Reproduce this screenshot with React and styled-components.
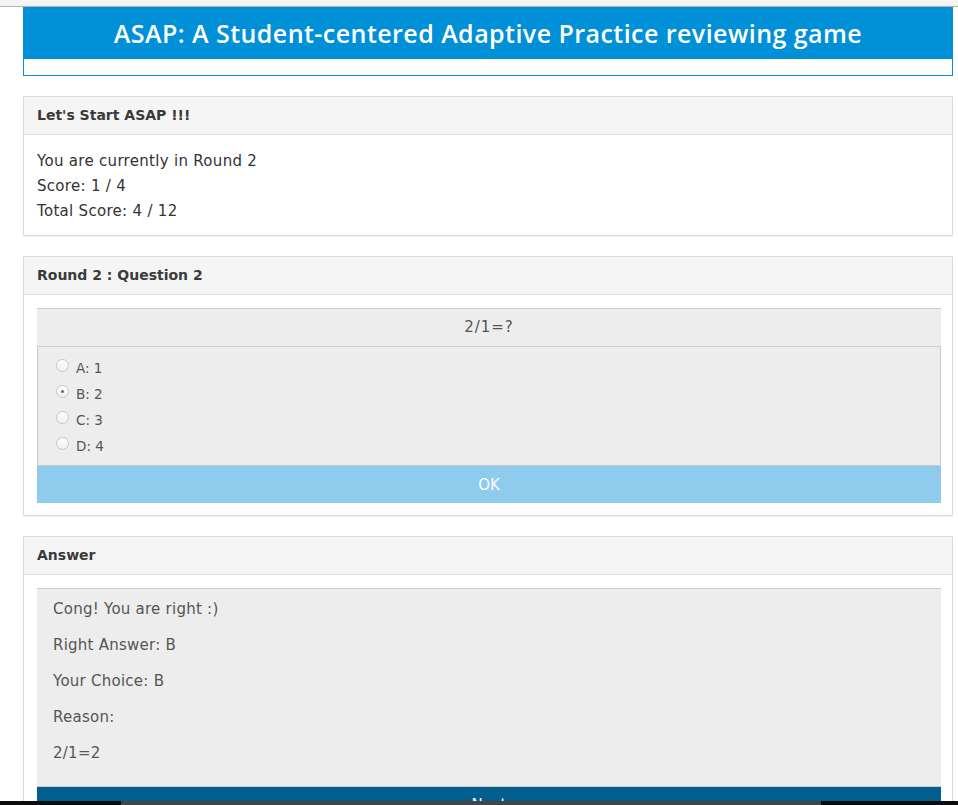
import React, { useState } from 'react';
import styled, { createGlobalStyle } from 'styled-components';

const GlobalStyle = createGlobalStyle`
  body {
    margin: 0;
    background: #fff;
    font-family: 'DejaVu Sans', 'Liberation Sans', sans-serif;
    color: #333;
  }
  * { box-sizing: border-box; }
`;

const options = [
  { key: 'A', value: '1' },
  { key: 'B', value: '2' },
  { key: 'C', value: '3' },
  { key: 'D', value: '4' },
];

const App = () => {
  const [choice, setChoice] = useState('B');

  return (
    <>
      <GlobalStyle />
      <TopStrip />
      <Page>
        <Banner>
          <Title>ASAP: A Student-centered Adaptive Practice reviewing game</Title>
          <BannerFoot />
        </Banner>

        {/* Round info */}
        <Panel>
          <PanelHeading>Let's Start ASAP !!!</PanelHeading>
          <InfoBody>
            <div>You are currently in Round 2</div>
            <div>Score: 1 / 4</div>
            <div>Total Score: 4 / 12</div>
          </InfoBody>
        </Panel>

        {/* Question */}
        <Panel>
          <PanelHeading>Round 2 : Question 2</PanelHeading>
          <PanelBody>
            <QuestionHead>2/1=?</QuestionHead>
            <OptionList>
              {options.map((o) => (
                <Option key={o.key} onClick={() => setChoice(o.key)}>
                  <Radio checked={choice === o.key} />
                  {o.key}: {o.value}
                </Option>
              ))}
            </OptionList>
            <ActionButton $tone='light'>OK</ActionButton>
          </PanelBody>
        </Panel>

        {/* Answer */}
        <Panel>
          <PanelHeading>Answer</PanelHeading>
          <PanelBody>
            <AnswerBox>
              <p>Cong! You are right :)</p>
              <p>Right Answer: B</p>
              <p>Your Choice: {choice}</p>
              <p>Reason:</p>
              <p>2/1=2</p>
            </AnswerBox>
            <ActionButton $tone='dark' $topLine>Next</ActionButton>
          </PanelBody>
        </Panel>
      </Page>
      <ScrollBar>
        <ScrollThumb />
      </ScrollBar>
    </>
  );
};

export default App;

const TopStrip = styled.div`
  height: 7px;
  background: #f4f4f4;
  border-bottom: 1px solid #b0b0b0;
`;

const Page = styled.div`
  padding: 0 5px 60px 23px;
`;

const Banner = styled.header`
  border: 1px solid #0090d7;
  margin-bottom: 20px;
`;

const Title = styled.h1`
  margin: 0;
  height: 51px;
  line-height: 50px;
  background: #0090d7;
  color: #fff;
  text-align: center;
  font-family: 'Open Sans', sans-serif;
  font-weight: 600;
  font-size: 25px;
  letter-spacing: 0.45px;
`;

const BannerFoot = styled.div`
  height: 16px;
  background: #fff;
`;

const Panel = styled.section`
  border: 1px solid #ddd;
  background: #fff;
  box-shadow: 0 1px 1px rgba(0, 0, 0, 0.05);
  margin-bottom: 20px;
`;

const PanelHeading = styled.div`
  height: 38px;
  padding: 0 13px;
  line-height: 37px;
  background: #f5f5f5;
  border-bottom: 1px solid #ddd;
  font-size: 14px;
  font-weight: bold;
  color: #3a3a3a;
`;

const InfoBody = styled.div`
  padding: 14px 13px 11px;
  font-size: 15px;
  letter-spacing: 0.3px;
  line-height: 25px;
  color: #333;
`;

const PanelBody = styled.div`
  padding: 13px 11px 12px 13px;
`;

const QuestionHead = styled.div`
  height: 38px;
  border-top: 1px solid #ccc;
  background: #ededed;
  line-height: 37px;
  text-align: center;
  font-size: 15px;
  letter-spacing: 1px;
  color: #555;
`;

const OptionList = styled.div`
  border: 1px solid #ccc;
  background: #ededed;
  padding: 8px 18px 6px;
`;

const Option = styled.label`
  display: flex;
  align-items: center;
  gap: 7px;
  height: 26px;
  font-size: 13.5px;
  color: #555;
  cursor: pointer;
`;

const Radio = styled.span`
  position: relative;
  top: -3px;
  width: 13px;
  height: 13px;
  border-radius: 50%;
  border: 1px solid #c8c8c8;
  background: linear-gradient(#fdfdfd, #f0f0f0);
  display: flex;
  align-items: center;
  justify-content: center;

  &::after {
    content: '';
    width: 3px;
    height: 3px;
    border-radius: 50%;
    background: ${(p) => (p.checked ? '#666' : 'transparent')};
  }
`;

const ActionButton = styled.button`
  display: block;
  width: 100%;
  height: 37px;
  border: none;
  border-top: ${(p) => (p.$topLine ? '1px solid #ccc' : 'none')};
  background: ${(p) => (p.$tone === 'dark' ? '#005f8f' : '#8ecbec')};
  color: #fff;
  font-family: inherit;
  font-size: 15px;
  cursor: pointer;
`;

const AnswerBox = styled.div`
  border-top: 1px solid #ccc;
  background: #ededed;
  padding: 10px 16px 7px;
  font-size: 15px;
  letter-spacing: 0.25px;
  color: #555;

  p {
    margin: 0 0 16px;
    line-height: 20px;
  }
`;

const ScrollBar = styled.div`
  position: fixed;
  left: 0;
  right: 0;
  bottom: 0;
  height: 4px;
  background: #0c0c0c;
`;

const ScrollThumb = styled.div`
  margin-left: 121px;
  width: 700px;
  height: 100%;
  background: #444;
`;
